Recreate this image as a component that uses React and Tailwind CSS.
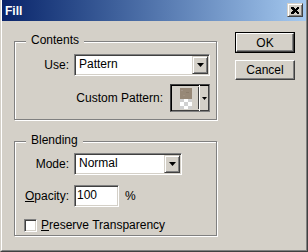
import React from 'react';

const FONT = { fontFamily: '"Liberation Sans", Arial, sans-serif' };

// classic 3D bevels
const SUNKEN =
  'border border-t-[#808080] border-l-[#808080] border-r-white border-b-white shadow-[inset_1px_1px_0_#404040,inset_-1px_-1px_0_#d4d0c8]';
const RAISED =
  'border border-t-white border-l-white border-r-[#404040] border-b-[#404040] shadow-[inset_-1px_-1px_0_#808080]';
const RAISED_SMALL =
  'border border-t-[#d4d0c8] border-l-[#d4d0c8] border-r-[#404040] border-b-[#404040] shadow-[inset_1px_1px_0_white,inset_-1px_-1px_0_#808080]';

function Arrow() {
  return (
    <svg width="7" height="4" viewBox="0 0 7 4">
      <path d="M0 0h7L3.5 4z" fill="black" />
    </svg>
  );
}

function Combo({ value, width }) {
  return (
    <div className={`flex h-[22px] bg-white ${SUNKEN} ${width}`}>
      <span className="flex-1 pl-[4px] pt-[1px] leading-[17px]">{value}</span>
      <div className={`w-[16px] h-[18px] mr-[1px] mt-[1px] flex items-center justify-center bg-[#d4d0c8] ${RAISED_SMALL}`}>
        <Arrow />
      </div>
    </div>
  );
}

function GroupBox({ label, className, children }) {
  return (
    <div className={`relative border border-[#808080] shadow-[inset_1px_1px_0_white,1px_1px_0_white] ${className}`}>
      <span className="absolute top-[-9px] left-[11px] px-[5px] bg-[#d4d0c8] leading-[14px]">{label}</span>
      {children}
    </div>
  );
}

function PatternPicker() {
  return (
    <div className="w-[40px] h-[28px] flex border border-t-[#404040] border-l-[#404040] border-r-[#808080] border-b-[#808080] shadow-[inset_1px_1px_0_black,inset_-1px_-1px_0_#404040] bg-[#d4d0c8]">
      <div className="w-[27px] flex items-center justify-center pl-[2px]">
        <svg width="12" height="21" viewBox="0 0 12 21" shapeRendering="crispEdges">
          <rect x="0" y="0" width="12" height="11" fill="#978877" />
          <rect x="1" y="2" width="2" height="1" fill="#a4968a" />
          <rect x="6" y="4" width="3" height="1" fill="#8b7c6b" />
          <rect x="3" y="7" width="2" height="1" fill="#a09181" />
          <rect x="0" y="11" width="12" height="10" fill="#ffffff" />
          <rect x="0" y="11" width="4" height="3" fill="#d0d0d0" />
          <rect x="8" y="11" width="4" height="3" fill="#d0d0d0" />
          <rect x="4" y="14" width="4" height="4" fill="#d0d0d0" />
          <rect x="0" y="18" width="4" height="3" fill="#d0d0d0" />
          <rect x="8" y="18" width="4" height="3" fill="#d0d0d0" />
        </svg>
      </div>
      <div className="w-px my-[2px] bg-[#404040]" />
      <div className="flex-1 flex items-center justify-center shadow-[inset_1px_0_0_white]">
        <svg width="5" height="3" viewBox="0 0 5 3">
          <path d="M0 0h5L2.5 3z" fill="black" />
        </svg>
      </div>
    </div>
  );
}

export default function App() {
  return (
    <div style={FONT} className="w-[308px] h-[252px] text-[12px] leading-[14px] text-black bg-[#d4d0c8] border-r border-b border-r-[#404040] border-b-[#404040] border-l border-l-[#d4d0c8]">
      <div className="h-full flex flex-col border-l border-r border-b border-l-white border-r-[#808080] border-b-[#808080]">
        {/* title bar */}
        <div className="h-[21px] flex items-center justify-between pl-[3px] pr-[3px] bg-gradient-to-r from-[#0a246a] to-[#a6caf0]">
          <span className="text-white font-bold text-[12px]">Fill</span>
          <div className={`w-[16px] h-[14px] flex items-center justify-center bg-[#d4d0c8] mt-[-1px] ${RAISED_SMALL}`}>
            <svg width="8" height="7" viewBox="0 0 8 7" shapeRendering="crispEdges">
              <path d="M0 0h2l2 2 2-2h2v1L6 3.5 8 6v1H6L4 5 2 7H0V6l2-2.5L0 1z" fill="black" />
            </svg>
          </div>
        </div>

        {/* body */}
        <div className="flex pl-[12px] pt-[11px]">
          <div className="w-[203px] mt-[9px] flex flex-col">
            <GroupBox label="Contents" className="h-[79px]">
              <div className="pt-[12px] pr-[6px] flex flex-col">
                <div className="flex items-center">
                  <span className="w-[54px] text-right">Use:</span>
                  <div className="ml-[5px]">
                    <Combo value="Pattern" width="w-[136px]" />
                  </div>
                </div>
                <div className="mt-[8px] flex items-center justify-end gap-[7px]">
                  <span>Custom Pattern:</span>
                  <PatternPicker />
                </div>
              </div>
            </GroupBox>

            <GroupBox label="Blending" className="h-[95px] mt-[21px]">
              <div className="pt-[11px] flex flex-col">
                <div className="flex items-center">
                  <span className="w-[54px] text-right">Mode:</span>
                  <div className="ml-[5px]">
                    <Combo value="Normal" width="w-[108px]" />
                  </div>
                </div>
                <div className="mt-[10px] flex items-center">
                  <span className="w-[54px] text-right">
                    <u className="underline-offset-[1px]">O</u>pacity:
                  </span>
                  <div className={`ml-[5px] w-[45px] h-[22px] bg-white pl-[2px] leading-[18px] ${SUNKEN}`}>100</div>
                  <span className="ml-[6px]">%</span>
                </div>
                <div className="mt-[11px] ml-[9px] flex items-center gap-[4px]">
                  <div className={`w-[13px] h-[13px] bg-white ${SUNKEN}`} />
                  <span>
                    <u className="underline-offset-[1px]">P</u>reserve Transparency
                  </span>
                </div>
              </div>
            </GroupBox>
          </div>

          <div className="ml-[18px] w-[60px] flex flex-col">
            <div className="h-[21px] border border-black">
              <button className={`w-full h-full bg-[#d4d0c8] leading-[14px] ${RAISED}`}>OK</button>
            </div>
            <button className={`mt-[7px] h-[20px] w-full bg-[#d4d0c8] leading-[14px] ${RAISED}`}>Cancel</button>
          </div>
        </div>
      </div>
    </div>
  );
}
